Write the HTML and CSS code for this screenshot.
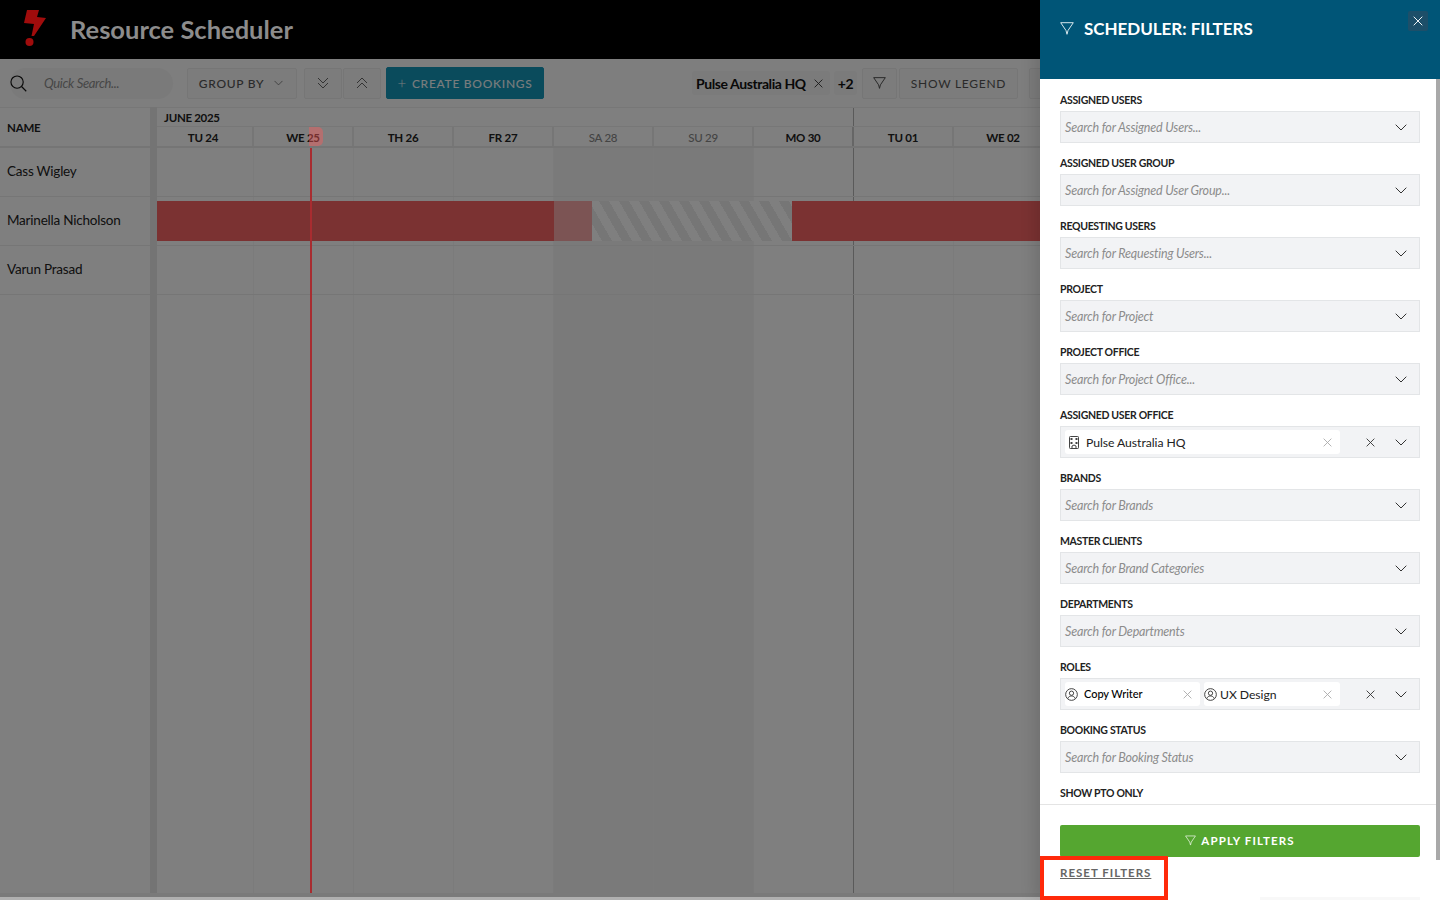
FILE: index.html
```html
<!DOCTYPE html>
<html lang="en">
<head>
<meta charset="utf-8">
<title>Resource Scheduler</title>
<link rel="stylesheet" href="styles.css">
</head>
<body>
<svg class="defs" width="0" height="0" aria-hidden="true">
  <symbol id="chev" viewBox="0 0 12 7"><path d="M.7 .7l5.300 5.300 5.300-5.300" fill="none" stroke="currentColor" stroke-width="1"/></symbol>
  <symbol id="x" viewBox="0 0 10 10"><path d="M.7 .7l8.600 8.600M9.300 .7l-8.600 8.600" fill="none" stroke="currentColor" stroke-width="1"/></symbol>
  <symbol id="funnel" viewBox="0 0 14 13"><path d="M.7 .7h12.600L8 8.500 7 12.300 6 8.500z" fill="none" stroke="currentColor" stroke-width="1"/></symbol>
  <symbol id="user" viewBox="0 0 14 14"><g fill="none" stroke="currentColor" stroke-width="1"><circle cx="7" cy="7" r="6.300"/><circle cx="7" cy="5.600" r="2.300"/><path d="M3 11.400c.7-2 2.200-2.800 4-2.800s3.300.8 4 2.800"/></g></symbol>
</svg>
<div class="app">
  <header class="topbar">
    <svg class="logo" viewBox="0 0 24 38"><path d="M4 0h12l-2 7 9 1L11 26H8.500l2.500-12L1 13z" fill="currentColor"/><circle cx="6.500" cy="32" r="4" fill="currentColor"/></svg>
    <h1 class="app-title">Resource Scheduler</h1>
  </header>
  <div class="toolbar">
    <div class="search">
      <svg class="search-icon" viewBox="0 0 18 18"><g fill="none" stroke="currentColor" stroke-width="1.200"><circle cx="7.500" cy="7.500" r="6.500"/><path d="M12.200 12.200l5 5"/></g></svg>
      <span class="search-text">Quick Search...</span>
    </div>
    <button class="btn btn-group">GROUP BY <svg class="ic-chev"><use href="#chev"/></svg></button>
    <div class="btn-pair">
      <button class="btn btn-icon"><svg viewBox="0 0 12 12" class="ic-double"><path d="M1 1l5 5 5-5M1 6l5 5 5-5" fill="none" stroke="currentColor"/></svg></button>
      <button class="btn btn-icon"><svg viewBox="0 0 12 12" class="ic-double"><path d="M1 6l5-5 5 5M1 11l5-5 5 5" fill="none" stroke="currentColor"/></svg></button>
    </div>
    <button class="btn btn-create"><span class="plus">+</span> CREATE BOOKINGS</button>
    <div class="toolbar-right">
      <span class="chip">Pulse Australia HQ <svg class="ic-x"><use href="#x"/></svg></span>
      <span class="chip chip-count">+2</span>
      <button class="btn btn-filter"><svg class="ic-funnel"><use href="#funnel"/></svg></button>
      <button class="btn btn-legend">SHOW LEGEND</button>
      <button class="btn btn-extra"></button>
    </div>
  </div>
  <div class="board">
    <div class="names">
      <div class="names-head">NAME</div>
      <div class="name-row">Cass Wigley</div>
      <div class="name-row">Marinella Nicholson</div>
      <div class="name-row">Varun Prasad</div>
    </div>
    <div class="splitter"></div>
    <div class="timeline">
      <div class="months"><span class="month">JUNE 2025</span></div>
      <div class="days">
        <div class="day day-first">TU 24</div>
        <div class="day day-today">WE 25<span class="today-mark"></span></div>
        <div class="day">TH 26</div>
        <div class="day">FR 27</div>
        <div class="day day-off">SA 28</div>
        <div class="day day-off">SU 29</div>
        <div class="day day-monthend">MO 30</div>
        <div class="day">TU 01</div>
        <div class="day">WE 02</div>
      </div>
      <div class="body">
        <div class="cols">
          <div class="col col-first"></div><div class="col"></div><div class="col"></div><div class="col"></div>
          <div class="col col-off"></div><div class="col col-off"></div><div class="col col-monthend"></div><div class="col"></div><div class="col"></div>
        </div>
        <div class="row"></div>
        <div class="row row-booked">
          <div class="seg seg-red seg-a"></div>
          <div class="seg seg-light"></div>
          <div class="seg seg-stripe"></div>
          <div class="seg seg-red seg-b"></div>
        </div>
        <div class="row"></div>
        <div class="now-line"></div>
      </div>
    </div>
  </div>
  <div class="app-foot"></div>
  <div class="overlay"></div>
  <aside class="drawer">
    <div class="drawer-head">
      <svg class="drawer-funnel"><use href="#funnel"/></svg>
      <h2 class="drawer-title">SCHEDULER: FILTERS</h2>
      <button class="drawer-close"><svg class="ic-close"><use href="#x"/></svg></button>
    </div>
    <div class="drawer-body">
      <div class="field"><label class="field-label">ASSIGNED USERS</label><div class="select"><span class="ph">Search for Assigned Users...</span><svg class="ic-chev2"><use href="#chev"/></svg></div></div>
      <div class="field"><label class="field-label">ASSIGNED USER GROUP</label><div class="select"><span class="ph">Search for Assigned User Group...</span><svg class="ic-chev2"><use href="#chev"/></svg></div></div>
      <div class="field"><label class="field-label">REQUESTING USERS</label><div class="select"><span class="ph">Search for Requesting Users...</span><svg class="ic-chev2"><use href="#chev"/></svg></div></div>
      <div class="field"><label class="field-label">PROJECT</label><div class="select"><span class="ph">Search for Project</span><svg class="ic-chev2"><use href="#chev"/></svg></div></div>
      <div class="field"><label class="field-label">PROJECT OFFICE</label><div class="select"><span class="ph">Search for Project Office...</span><svg class="ic-chev2"><use href="#chev"/></svg></div></div>
      <div class="field"><label class="field-label">ASSIGNED USER OFFICE</label>
        <div class="select select-filled">
          <span class="tag tag-wide">
            <svg class="ic-office" viewBox="0 0 10 13"><g fill="none" stroke="currentColor" stroke-width="1"><rect x=".5" y=".5" width="9" height="12" rx=".8"/><path d="M2.500 2v2M4 3h-3M7.500 2v2M9 3H6M2.500 6v2M4 7H1M7.500 6v2M9 7H6M3 12.500v-2.500l2-1 2 1v2.500"/></g></svg>
            <span class="tag-text">Pulse Australia HQ</span>
            <svg class="ic-tagx"><use href="#x"/></svg>
          </span>
          <svg class="ic-clear"><use href="#x"/></svg>
          <svg class="ic-chev2"><use href="#chev"/></svg>
        </div>
      </div>
      <div class="field"><label class="field-label">BRANDS</label><div class="select"><span class="ph">Search for Brands</span><svg class="ic-chev2"><use href="#chev"/></svg></div></div>
      <div class="field"><label class="field-label">MASTER CLIENTS</label><div class="select"><span class="ph">Search for Brand Categories</span><svg class="ic-chev2"><use href="#chev"/></svg></div></div>
      <div class="field"><label class="field-label">DEPARTMENTS</label><div class="select"><span class="ph">Search for Departments</span><svg class="ic-chev2"><use href="#chev"/></svg></div></div>
      <div class="field"><label class="field-label">ROLES</label>
        <div class="select select-filled">
          <span class="tag tag-one">
            <svg class="ic-user"><use href="#user"/></svg>
            <span class="tag-text tag-text-small">Copy Writer</span>
            <svg class="ic-tagx"><use href="#x"/></svg>
          </span>
          <span class="tag tag-two">
            <svg class="ic-user"><use href="#user"/></svg>
            <span class="tag-text tag-text-tight">UX Design</span>
            <svg class="ic-tagx"><use href="#x"/></svg>
          </span>
          <svg class="ic-clear"><use href="#x"/></svg>
          <svg class="ic-chev2"><use href="#chev"/></svg>
        </div>
      </div>
      <div class="field"><label class="field-label">BOOKING STATUS</label><div class="select"><span class="ph">Search for Booking Status</span><svg class="ic-chev2"><use href="#chev"/></svg></div></div>
      <div class="field"><label class="field-label">SHOW PTO ONLY</label></div>
    </div>
    <div class="drawer-foot">
      <button class="apply"><svg class="ic-apply"><use href="#funnel"/></svg> APPLY FILTERS</button>
      <a class="reset">RESET FILTERS</a>
    </div>
    <div class="scrollbar"></div>
    <div class="foot-shade"></div>
    <div class="highlight"></div>
  </aside>
</div>
</body>
</html>
```
FILE: styles.css
```css
* { box-sizing: border-box; }
html, body { margin: 0; padding: 0; height: 100%; overflow: hidden; }
body { font-family: Lato, "Open Sans", sans-serif; color: #000; background: #fff; }
.defs { position: absolute; }
button { font-family: inherit; margin: 0; }
svg { display: block; flex: none; }

.app { position: relative; width: 1440px; height: 900px; display: flex; flex-direction: column; background: #fff; overflow: hidden; }

/* top bar */
.topbar { height: 59px; flex: none; background: #000; display: flex; align-items: center; padding-left: 23px; }
.logo { width: 24px; height: 38px; color: #a00c0c; margin-top: -2px; position: relative; z-index: 2; }
.app-title { margin: 0 0 0 23px; font-size: 25.500px; font-weight: 700; color: #8c8c8c; line-height: 1; position: relative; z-index: 2; }

/* toolbar */
.toolbar { height: 48px; flex: none; display: flex; align-items: center; padding-left: 10px; background: #fcfcfc; }
.search { width: 163px; height: 31px; border-radius: 16px; background: #f4f4f4; display: flex; align-items: center; margin-right: 14px; }
.search-icon { width: 17px; height: 17px; color: #111; margin-right: 17px; }
.search-text { font-size: 13px; font-style: italic; color: #8e8e8e; letter-spacing: -.33px; }
.btn { background: #f8f8f8; border: 1px solid #ececec; border-radius: 2px; color: #555; font-size: 12px; letter-spacing: .72px; height: 31px; padding: 0; display: flex; align-items: center; justify-content: center; }
.btn-group { width: 110px; margin-right: 7px; font-weight: 500; gap: 10px; padding-right: 2px; }
.ic-chev { width: 9px; height: 6px; color: #666; }
.btn-pair { display: flex; gap: 1px; margin-right: 5px; }
.btn-icon { width: 38px; color: #666; }
.ic-double { width: 12px; height: 12px; }
.btn-create { width: 158px; height: 32px; background: #1496b8; border-color: #1496b8; color: #f0f8fa; gap: 5px; font-weight: 500; }
.plus { font-size: 15px; font-weight: 300; line-height: 1; }
.toolbar-right { margin-left: 148px; display: flex; align-items: center; }
.chip { height: 24px; display: flex; align-items: center; background: #f6f6f6; border-radius: 3px; font-size: 14px; font-weight: 700; color: #111; letter-spacing: -.42px; padding-left: 4px; width: 138px; margin-right: 4px; white-space: nowrap; }
.ic-x { width: 9px; height: 9px; margin-left: 8px; color: #333; }
.chip-count { width: 23px; padding: 0; justify-content: center; margin-right: 5px; }
.btn-filter { width: 35px; margin-right: 2px; }
.ic-funnel { width: 13px; height: 12px; color: #444; }
.btn-legend { width: 119px; margin-right: 11px; }
.btn-extra { width: 40px; }

/* board */
.board { flex: 1; display: flex; min-height: 0; background: #fff; }
.names { width: 150px; flex: none; }
.names-head { height: 41px; display: flex; align-items: center; padding-left: 7px; font-size: 11.500px; font-weight: 700; color: #222; border-top: 1px solid #eee; border-bottom: 2px solid #eaeaea; letter-spacing: -.2px; }
.name-row { height: 49px; display: flex; align-items: center; padding: 0 7px 3px; font-size: 13.500px; color: #222; border-bottom: 1px solid #ededed; letter-spacing: -.22px; }
.splitter { width: 7px; flex: none; background: #e8e8e8; }
.timeline { flex: 1; min-width: 0; overflow: hidden; border-top: 1px solid #eee; display: flex; flex-direction: column; }
.months { height: 19px; flex: none; display: flex; border-bottom: 1px solid #eee; }
.month { width: 697px; flex: none; border-right: 1px solid #b4b4b4; font-size: 11.500px; font-weight: 700; color: #222; padding-left: 7px; letter-spacing: -.3px; line-height: 20px; }
.days { display: flex; height: 21px; flex: none; border-bottom: 2px solid #eaeaea; }
.day { width: 100px; flex: none; border-right: 2px solid #ededed; display: flex; align-items: center; justify-content: center; font-size: 11.500px; font-weight: 700; color: #222; letter-spacing: -.25px; position: relative; padding-top: 1px; }
.day-first { width: 97px; padding-right: 3px; }
.day-off { font-weight: 500; color: #888; }
.day-monthend { border-right-color: #ccc; }
.today-mark { position: absolute; left: 55px; top: 0; width: 14px; height: 19px; background: rgba(255,90,90,.42); border-radius: 0 5px 5px 0; z-index: 2; }

.body { position: relative; flex: 1; min-height: 0; }
.cols { position: absolute; inset: 0; display: flex; }
.col { width: 100px; flex: none; border-right: 1px solid #f6f6f6; }
.col-first { width: 97px; }
.col-off { background: #f5f5f5; }
.col-monthend { border-right-color: #b4b4b4; }
.row { position: relative; height: 49px; border-bottom: 1px solid #ededed; }
.row-booked { display: flex; align-items: center; }
.seg { height: 40px; flex: none; }
.seg-red { background: #f76464; }
.seg-a { width: 397px; }
.seg-light { width: 38px; background: #f9a8a8; }
.seg-stripe { width: 200px; background: repeating-linear-gradient(60deg, #fff 0 8.660px, #ededed 8.660px 17.320px); }
.seg-b { width: 300px; }
.now-line { position: absolute; top: 0; bottom: 0; left: 153px; width: 2px; background: #a82c30; z-index: 2; }
.app-foot { height: 7px; flex: none; background: #b0b0b0; border-top: 4px solid #7a7a7a; position: relative; z-index: 2; }

.overlay { position: absolute; inset: 0; background: rgba(0,0,0,.5); }

/* drawer */
.drawer { position: absolute; top: 0; right: 0; bottom: 0; width: 400px; background: #fff; display: flex; flex-direction: column; box-shadow: -6px 0 14px rgba(0,0,0,.12); z-index: 3; }
.drawer-head { height: 79px; flex: none; background: #005577; color: #fff; display: flex; align-items: flex-start; padding: 21px 0 0 20px; position: relative; }
.drawer-funnel { width: 14px; height: 13px; margin-top: 1px; color: #d6e6ec; }
.drawer-title { margin: -3px 0 0 10px; font-size: 17px; font-weight: 700; line-height: 22px; letter-spacing: -.03px; color: #fff; }
.drawer-close { position: absolute; top: 11px; right: 12px; width: 20px; height: 20px; border: 0; border-radius: 2px; background: #1d4f69; color: #eef4f7; padding: 0; display: flex; align-items: center; justify-content: center; }
.ic-close { width: 10px; height: 10px; }
.drawer-body { flex: 1; min-height: 0; overflow: hidden; padding: 13px 20px 0; border-bottom: 1px solid #e4e4e4; }
.field { margin-bottom: 12px; }
.field-label { display: block; height: 16px; margin-bottom: 3px; font-size: 10.500px; font-weight: 700; line-height: 16px; color: #222; letter-spacing: -.32px; }
.select { height: 32px; background: #f2f3f5; border: 1px solid #e3e5e7; display: flex; align-items: center; padding: 0 12px 0 4px; position: relative; }
.ph { flex: 1; font-size: 12.500px; font-style: italic; color: #8c8c8c; letter-spacing: -.18px; }
.ic-chev2 { width: 12px; height: 7px; color: #333; }
.tag { height: 24px; background: #fff; border-radius: 3px; display: flex; align-items: center; padding: 0 8px 0 0; flex: none; }
.tag-wide { width: 275px; padding-left: 4px; }
.tag-one { width: 135px; margin-right: 4px; }
.tag-two { width: 136px; }
.ic-office { width: 10px; height: 13px; color: #444; margin-right: 7px; }
.tag-text { flex: 1; font-size: 12.200px; color: #222; letter-spacing: -.05px; }
.tag-text-small { font-size: 11px; font-weight: 500; color: #000; margin-left: 6px; margin-top: -2px; }
.tag-text-tight { margin-left: 3px; margin-top: 1px; }
.ic-user { width: 13px; height: 13px; color: #333; }
.ic-tagx { width: 9px; height: 9px; color: #aaa; }
.ic-clear { width: 9px; height: 9px; color: #333; margin: 0 20px 0 auto; }
.drawer-foot { height: 95px; flex: none; padding: 20px 20px 0; }
.apply { width: 360px; height: 32px; background: #55a630; border: 0; border-radius: 2px; color: #fff; font-size: 11.500px; font-weight: 700; letter-spacing: 1.100px; display: flex; align-items: center; justify-content: center; gap: 5px; padding: 0 0 2px; }
.ic-apply { width: 11px; height: 11px; color: #e4f2dc; }
.reset { display: block; margin-top: 9px; font-size: 11.500px; font-weight: 700; letter-spacing: 1px; line-height: 14px; color: #666; text-decoration: underline; width: fit-content; }
.scrollbar { position: absolute; top: 79px; right: 0; width: 4px; height: 781px; background: #a9a9a9; }
.foot-shade { position: absolute; left: 220px; right: 20px; bottom: 0; height: 3px; background: #f8f8f8; }
.highlight { position: absolute; left: 0; top: 856px; width: 128px; height: 44px; border: 4px solid #ff2a0a; }
```
